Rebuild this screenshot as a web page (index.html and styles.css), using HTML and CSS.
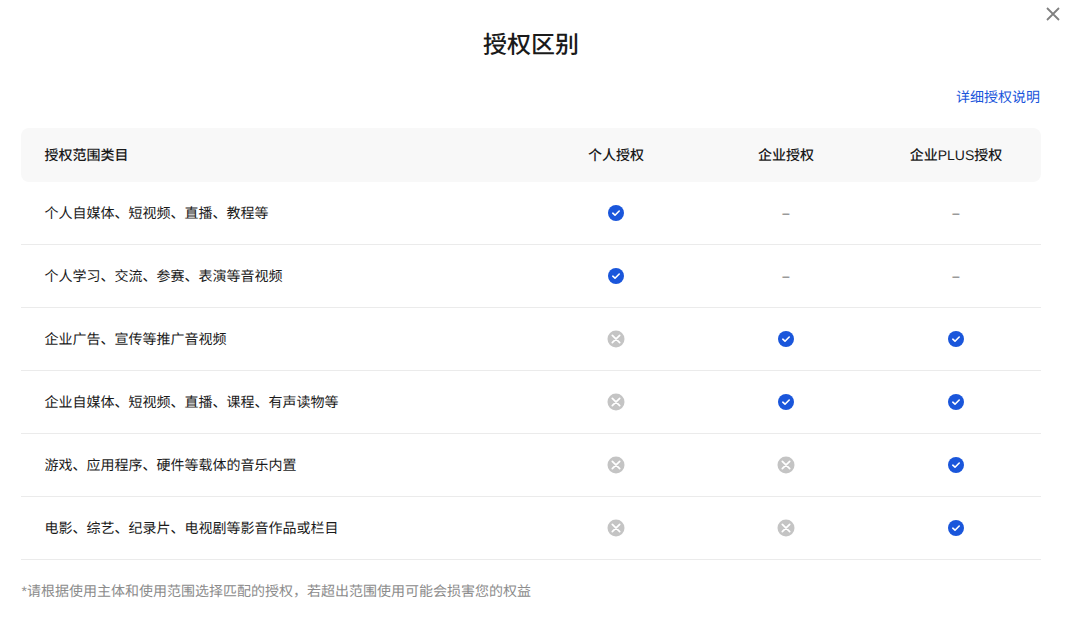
FILE: index.html
```html
<!DOCTYPE html>
<html lang="zh-CN">
<head>
<meta charset="utf-8">
<title>授权区别</title>
<link rel="stylesheet" href="styles.css">
</head>
<body>
<svg class="sprite" width="0" height="0" aria-hidden="true">
  <symbol id="yes" viewBox="0 0 16 16">
    <circle cx="8" cy="8" r="8" fill="#1a56db"/>
    <path d="M4.8 8.2 7 10.2 11.2 6" fill="none" stroke="#fff" stroke-width="1.6" stroke-linecap="round" stroke-linejoin="round"/>
  </symbol>
  <symbol id="no" viewBox="0 0 18 18">
    <circle cx="9" cy="9" r="8.5" fill="#c4c4c4"/>
    <path d="M5.3 5.3l7.4 7.4M12.7 5.3l-7.4 7.4" fill="none" stroke="#fff" stroke-width="1.7" stroke-linecap="round"/>
  </symbol>
</svg>
<main class="dialog">
  <button class="close" aria-label="关闭">
    <svg width="14" height="14" viewBox="0 0 14 14"><path d="M1 1l12 12M13 1L1 13" fill="none" stroke="#808080" stroke-width="1.8"/></svg>
  </button>
  <h1 class="title">授权区别</h1>
  <div class="link-row"><a class="link" href="#">详细授权说明</a></div>
  <div class="table">
    <div class="row head">
      <div class="name">授权范围类目</div>
      <div class="cell">个人授权</div>
      <div class="cell">企业授权</div>
      <div class="cell">企业PLUS授权</div>
    </div>
    <div class="row">
      <div class="name">个人自媒体、短视频、直播、教程等</div>
      <div class="cell"><svg class="ic"><use href="#yes"/></svg></div>
      <div class="cell dash">–</div>
      <div class="cell dash">–</div>
    </div>
    <div class="row">
      <div class="name">个人学习、交流、参赛、表演等音视频</div>
      <div class="cell"><svg class="ic"><use href="#yes"/></svg></div>
      <div class="cell dash">–</div>
      <div class="cell dash">–</div>
    </div>
    <div class="row">
      <div class="name">企业广告、宣传等推广音视频</div>
      <div class="cell"><svg class="ic-no"><use href="#no"/></svg></div>
      <div class="cell"><svg class="ic"><use href="#yes"/></svg></div>
      <div class="cell"><svg class="ic"><use href="#yes"/></svg></div>
    </div>
    <div class="row">
      <div class="name">企业自媒体、短视频、直播、课程、有声读物等</div>
      <div class="cell"><svg class="ic-no"><use href="#no"/></svg></div>
      <div class="cell"><svg class="ic"><use href="#yes"/></svg></div>
      <div class="cell"><svg class="ic"><use href="#yes"/></svg></div>
    </div>
    <div class="row">
      <div class="name">游戏、应用程序、硬件等载体的音乐内置</div>
      <div class="cell"><svg class="ic-no"><use href="#no"/></svg></div>
      <div class="cell"><svg class="ic-no"><use href="#no"/></svg></div>
      <div class="cell"><svg class="ic"><use href="#yes"/></svg></div>
    </div>
    <div class="row">
      <div class="name">电影、综艺、纪录片、电视剧等影音作品或栏目</div>
      <div class="cell"><svg class="ic-no"><use href="#no"/></svg></div>
      <div class="cell"><svg class="ic-no"><use href="#no"/></svg></div>
      <div class="cell"><svg class="ic"><use href="#yes"/></svg></div>
    </div>
  </div>
  <p class="note">*请根据使用主体和使用范围选择匹配的授权，若超出范围使用可能会损害您的权益</p>
</main>
</body>
</html>
```

FILE: styles.css
```css
* { box-sizing: border-box; }
html, body { margin: 0; padding: 0; background: #fff; }
body {
  width: 1069px;
  height: 617px;
  overflow: hidden;
  font-family: "Liberation Sans", "Noto Sans CJK SC", sans-serif;
  color: #1a1a1a;
  text-rendering: geometricPrecision;
}
.sprite { position: absolute; }
.dialog { position: relative; padding: 0 28px 0 21px; }
.close {
  position: absolute;
  top: 7px;
  right: 9px;
  width: 14px;
  height: 14px;
  padding: 0;
  border: 0;
  background: none;
  display: flex;
}
.title {
  margin: 0;
  padding-top: 29px;
  height: 76px;
  font-size: 24px;
  line-height: 34px;
  font-weight: 500;
  text-align: center;
}
.link-row {
  height: 52px;
  padding-top: 11px;
  text-align: right;
  font-size: 14px;
  line-height: 20px;
}
.link { color: #1a56db; text-decoration: none; margin-right: 1px; }
.table { width: 1020px; }
.row {
  display: grid;
  grid-template-columns: 510px 170px 170px 170px;
  align-items: center;
  height: 63px;
  border-bottom: 1px solid #ebebeb;
  font-size: 14px;
  line-height: 20px;
}
.head {
  height: 54px;
  background: #f8f8f8;
  border-bottom: 0;
  border-radius: 8px;
  font-weight: 500;
}
.name { padding-left: 23.5px; }
.cell { display: flex; justify-content: center; align-items: center; }
.dash { color: #999; font-weight: 700; }
.ic { width: 16px; height: 16px; display: block; }
.ic-no { width: 18px; height: 18px; display: block; }
.note {
  margin: 0;
  padding: 21px 0 0 0.5px;
  font-size: 14px;
  line-height: 20px;
  color: #8c8c8c;
}
```
